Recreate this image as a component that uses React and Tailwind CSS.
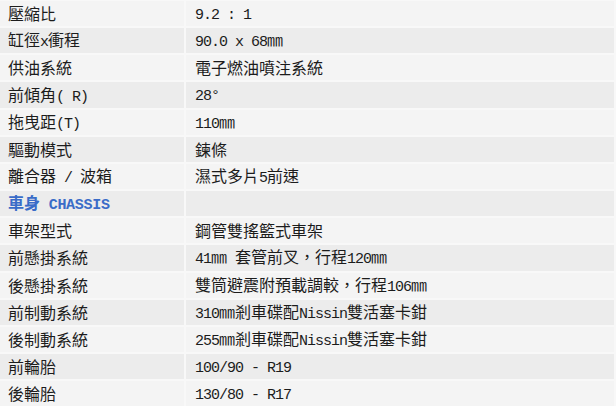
import React from "react";

const rows = [
  ["壓縮比", "9.2 : 1"],
  ["缸徑x衝程", "90.0 x 68㎜"],
  ["供油系統", "電子燃油噴注系統"],
  ["前傾角( R)", "28°"],
  ["拖曳距(T)", "110㎜"],
  ["驅動模式", "鍊條"],
  ["離合器 / 波箱", "濕式多片5前速"],
  ["__HEADER__", ""],
  ["車架型式", "鋼管雙搖籃式車架"],
  ["前懸掛系統", "41㎜ 套管前叉，行程120㎜"],
  ["後懸掛系統", "雙筒避震附預載調較，行程106㎜"],
  ["前制動系統", "310㎜剎車碟配Nissin雙活塞卡鉗"],
  ["後制動系統", "255㎜剎車碟配Nissin雙活塞卡鉗"],
  ["前輪胎", "100/90 - R19"],
  ["後輪胎", "130/80 - R17"],
];

function Txt({ s, bold }) {
  const parts = s.split(/([\x00-\x7F°]+)/).filter((p) => p.length);
  return (
    <span className="whitespace-pre">
      {parts.map((p, i) =>
        /^[\x00-\x7F°]+$/.test(p) ? (
          <span
            key={i}
            className={
              bold
                ? "font-['Liberation_Mono',monospace] text-[15px] tracking-[-0.3px] font-bold"
                : "font-['Liberation_Mono',monospace] text-[15px] tracking-[-1px]"
            }
          >
            {p}
          </span>
        ) : (
          <span
            key={i}
            className={
              bold
                ? "font-['Noto_Sans_CJK_TC',sans-serif] text-[16px] font-bold"
                : "font-['Noto_Sans_CJK_TC',sans-serif] text-[16px]"
            }
          >
            {p}
          </span>
        )
      )}
    </span>
  );
}

export default function App() {
  return (
    <div className="w-[616px] h-[406px] overflow-hidden bg-[#f8f8f8] pt-px">
      <div className="grid grid-cols-[184px_428px] gap-x-[2px] gap-y-[2px] auto-rows-[25.17px]">
        {rows.map(([k, v], i) => {
          const bg = i % 2 === 1 ? "bg-[#ececec]" : "bg-[#f4f4f4]";
          if (k === "__HEADER__") {
            return (
              <React.Fragment key={i}>
                <div className={`${bg} flex items-center pl-[8px] text-[#3a6cc8] leading-none`}>
                  <Txt s="車身 CHASSIS" bold />
                </div>
                <div className={`${bg}`}></div>
              </React.Fragment>
            );
          }
          return (
            <React.Fragment key={i}>
              <div className={`${bg} flex items-center pl-[8px] text-[#1c1c1c] leading-none`}>
                <Txt s={k} />
              </div>
              <div className={`${bg} flex items-center pl-[9px] text-[#1c1c1c] leading-none`}>
                <Txt s={v} />
              </div>
            </React.Fragment>
          );
        })}
      </div>
    </div>
  );
}
